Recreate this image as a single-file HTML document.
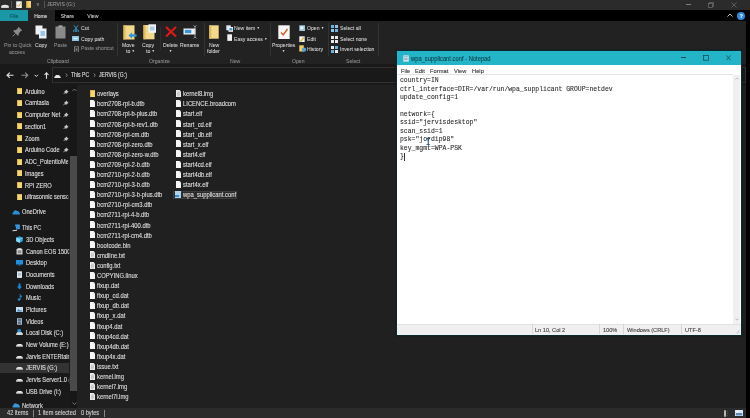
<!DOCTYPE html><html><head><meta charset="utf-8"><style>
html,body{margin:0;padding:0;width:750px;height:418px;overflow:hidden;background:#202020}
body{position:relative;font-family:"Liberation Sans",sans-serif}
#w{position:absolute;left:0;top:0;width:750px;height:418px;overflow:hidden;filter:blur(0.3px)}
#w>div,#w>svg{position:absolute}
.t{white-space:nowrap;-webkit-text-stroke:0.08px currentColor}
</style></head><body><div id="w">
<div style="left:0px;top:0px;width:750px;height:418px;background:#202020;"></div>
<div style="left:0px;top:0px;width:750px;height:10px;background:#2b2b2b;"></div>
<div style="left:0px;top:10px;width:750px;height:11px;background:#000000;"></div>
<div style="left:0px;top:10px;width:28px;height:11px;background:#1a98a6;"></div>
<div style="left:28px;top:10px;width:27px;height:11px;background:#222222;"></div>
<div class="t" style="left:10px;top:13.80px;font-size:5.2px;line-height:5.2px;color:#0f4f5a;">File</div>
<div class="t" style="left:34.2px;top:14.62px;font-size:4.95px;line-height:4.95px;color:#e0e0e0;">Home</div>
<div class="t" style="left:60.7px;top:13.50px;font-size:5px;line-height:5px;color:#d0d0d0;">Share</div>
<div class="t" style="left:87.3px;top:14.00px;font-size:5.2px;line-height:5.2px;color:#d0d0d0;">View</div>
<div style="left:0px;top:21px;width:745.6px;height:43px;background:#222222;"></div>
<div style="left:0px;top:64px;width:745.6px;height:21px;background:#191919;"></div>
<div style="left:52.4px;top:66.8px;width:694px;height:16px;background:#191919;border:0.8px solid #303030;box-sizing:border-box"></div>
<div class="t" style="left:71px;top:72.00px;font-size:6.6px;line-height:6.6px;color:#e6e6e6;transform:scaleX(0.77);transform-origin:0 50%;">This PC</div>
<div class="t" style="left:99.4px;top:72.00px;font-size:6.6px;line-height:6.6px;color:#e6e6e6;transform:scaleX(0.77);transform-origin:0 50%;">JERVIS (G:)</div>
<div style="left:0px;top:85px;width:70px;height:323px;background:#191919;"></div>
<div style="left:70px;top:85px;width:7px;height:323px;background:#171717;"></div>
<div style="left:70px;top:156px;width:7px;height:235px;background:#4a4a4a;"></div>
<div style="left:77px;top:85px;width:668.6px;height:323px;background:#202020;"></div>
<div style="left:745.6px;top:10px;width:4.4px;height:408px;background:#000000;"></div>
<svg style="left:12px;top:26px" width="11" height="11" viewBox="0 0 11 11"><path d="M6.5 0.8 L10.2 4.5 L8.6 5.3 L6.7 7.6 L6.9 9.3 L5.6 9.4 L1.6 5.4 L1.7 4.1 L3.4 4.3 L5.7 2.4 Z" fill="#8a8a8a"/><path d="M3.4 7.6 L0.6 10.4" stroke="#8a8a8a" stroke-width="1"/></svg>
<div class="t" style="left:3.5px;top:42.45px;font-size:5.9px;line-height:5.9px;color:#8c8c8c;transform:scaleX(0.87);transform-origin:0 50%;margin-top:0.2px">Pin to Quick</div>
<div class="t" style="left:8.8px;top:49.45px;font-size:5.9px;line-height:5.9px;color:#8c8c8c;transform:scaleX(0.87);transform-origin:0 50%;margin-top:0.2px">access</div>
<svg style="left:35px;top:25px" width="12" height="14" viewBox="0 0 12 14"><rect x="0.5" y="0.5" width="7" height="9" fill="#f2f2f2"/><rect x="4" y="3.5" width="7.5" height="10" fill="#e8f0f8"/><rect x="5.5" y="6" width="4.5" height="5" fill="#9cc8e8"/></svg>
<div class="t" style="left:35px;top:42.45px;font-size:5.9px;line-height:5.9px;color:#d2d2d2;transform:scaleX(0.87);transform-origin:0 50%;margin-top:0.2px">Copy</div>
<svg style="left:55px;top:25px" width="11" height="14" viewBox="0 0 11 14"><rect x="0.5" y="1.5" width="10" height="12" fill="#8a8a8a"/><rect x="3.5" y="0.3" width="4" height="2.5" fill="#a0a0a0"/></svg>
<div class="t" style="left:54.4px;top:42.45px;font-size:5.9px;line-height:5.9px;color:#8c8c8c;transform:scaleX(0.87);transform-origin:0 50%;margin-top:0.2px">Paste</div>
<svg style="left:73px;top:24.8px" width="6" height="7.5" viewBox="0 0 6 7.5"><path d="M1 0.3 L4 5 M5 0.3 L2 5" stroke="#3a9ad0" stroke-width="0.9"/><circle cx="1.6" cy="6" r="1.2" fill="none" stroke="#3a9ad0" stroke-width="0.8"/><circle cx="4.4" cy="6" r="1.2" fill="none" stroke="#3a9ad0" stroke-width="0.8"/></svg>
<div class="t" style="left:80.8px;top:25.95px;font-size:5.9px;line-height:5.9px;color:#d2d2d2;transform:scaleX(0.87);transform-origin:0 50%;margin-top:0.2px">Cut</div>
<svg style="left:72px;top:36px" width="7" height="5" viewBox="0 0 7 5"><rect x="0" y="0" width="7" height="5" fill="#8fc4ea"/><rect x="1.5" y="1.8" width="4" height="1.4" fill="#e8f4fc"/></svg>
<div class="t" style="left:80.8px;top:36.35px;font-size:5.9px;line-height:5.9px;color:#d2d2d2;transform:scaleX(0.87);transform-origin:0 50%;margin-top:0.2px">Copy path</div>
<svg style="left:73.5px;top:45.5px" width="5" height="6.5" viewBox="0 0 5 6.5"><rect x="0.4" y="0.8" width="4.2" height="5.4" fill="none" stroke="#8a8a8a" stroke-width="0.8"/><rect x="1.6" y="2.4" width="1.8" height="2.2" fill="#8a8a8a"/></svg>
<div class="t" style="left:80.8px;top:46.15px;font-size:5.9px;line-height:5.9px;color:#8c8c8c;transform:scaleX(0.87);transform-origin:0 50%;margin-top:0.2px">Paste shortcut</div>
<div class="t" style="left:47.2px;top:58.65px;font-size:5.9px;line-height:5.9px;color:#8c8c8c;transform:scaleX(0.87);transform-origin:0 50%;margin-top:0.2px">Clipboard</div>
<div style="left:117px;top:23px;width:0.8px;height:33px;background:#333333;"></div>
<svg style="left:122.5px;top:24.8px" width="14" height="15" viewBox="0 0 14 15"><rect x="0.5" y="0.3" width="11" height="14.2" fill="#f3d98a"/><rect x="0.5" y="0.3" width="2" height="14.2" fill="#e0bc5c"/><path d="M5.5 10.5 L9 7.3 L9 9.3 L13.5 9.3 L13.5 11.7 L9 11.7 L9 13.7 Z" fill="#3594d8"/></svg>
<div class="t" style="left:122px;top:42.45px;font-size:5.9px;line-height:5.9px;color:#d2d2d2;transform:scaleX(0.87);transform-origin:0 50%;margin-top:0.2px">Move</div>
<div class="t" style="left:126px;top:49.25px;font-size:5.9px;line-height:5.9px;color:#d2d2d2;transform:scaleX(0.87);transform-origin:0 50%;margin-top:0.2px">to <span style="font-size:3.6px;vertical-align:1px">&#x25BC;</span></div>
<svg style="left:142.5px;top:24px" width="14" height="16" viewBox="0 0 14 16"><rect x="0.5" y="1" width="11" height="14.3" fill="#f3d98a"/><rect x="0.5" y="1" width="2" height="14.3" fill="#e0bc5c"/><rect x="5.5" y="0.3" width="7.5" height="8.5" fill="#f0f4f8"/><rect x="7" y="2.5" width="4.5" height="4" fill="#a8cce8"/></svg>
<div class="t" style="left:142.3px;top:42.45px;font-size:5.9px;line-height:5.9px;color:#d2d2d2;transform:scaleX(0.87);transform-origin:0 50%;margin-top:0.2px">Copy</div>
<div class="t" style="left:145.5px;top:49.25px;font-size:5.9px;line-height:5.9px;color:#d2d2d2;transform:scaleX(0.87);transform-origin:0 50%;margin-top:0.2px">to <span style="font-size:3.6px;vertical-align:1px">&#x25BC;</span></div>
<div style="left:159.6px;top:27px;width:0.8px;height:23px;background:#2e2e2e;"></div>
<svg style="left:165px;top:26.3px" width="12" height="11.5" viewBox="0 0 12 11.5"><path d="M1 1 L11 10.5 M11 1 L1 10.5" stroke="#e01818" stroke-width="2.1"/></svg>
<div class="t" style="left:162.8px;top:42.45px;font-size:5.9px;line-height:5.9px;color:#d2d2d2;transform:scaleX(0.87);transform-origin:0 50%;margin-top:0.2px">Delete</div>
<div class="t" style="left:168.8px;top:48.85px;font-size:5.9px;line-height:5.9px;color:#d2d2d2;transform:scaleX(0.87);transform-origin:0 50%;margin-top:0.2px"><span style="font-size:3.6px;vertical-align:1px">&#x25BC;</span></div>
<svg style="left:182.5px;top:24.5px" width="15" height="14" viewBox="0 0 15 14"><rect x="0.5" y="3.5" width="12" height="6" fill="#f2f2f2"/><rect x="1.8" y="4.8" width="6.5" height="3.4" fill="#3596dc"/><path d="M10.5 0.5 L12 1.8 L13.5 0.5 M12 1.8 L12 12 M10.5 13.3 L12 12 L13.5 13.3" stroke="#bbbbbb" stroke-width="0.8" fill="none"/></svg>
<div class="t" style="left:180.4px;top:42.45px;font-size:5.9px;line-height:5.9px;color:#d2d2d2;transform:scaleX(0.87);transform-origin:0 50%;margin-top:0.2px">Rename</div>
<div class="t" style="left:149.2px;top:58.65px;font-size:5.9px;line-height:5.9px;color:#8c8c8c;transform:scaleX(0.87);transform-origin:0 50%;margin-top:0.2px">Organize</div>
<div style="left:203.6px;top:23px;width:0.8px;height:33px;background:#333333;"></div>
<svg style="left:209px;top:25px" width="10" height="14" viewBox="0 0 10 14"><rect x="0.3" y="0.3" width="9.4" height="13.4" fill="#f3d98a"/><rect x="0.3" y="0.3" width="2" height="13.4" fill="#e0bc5c"/></svg>
<div class="t" style="left:209px;top:42.45px;font-size:5.9px;line-height:5.9px;color:#d2d2d2;transform:scaleX(0.87);transform-origin:0 50%;margin-top:0.2px">New</div>
<div class="t" style="left:206.5px;top:49.25px;font-size:5.9px;line-height:5.9px;color:#d2d2d2;transform:scaleX(0.87);transform-origin:0 50%;margin-top:0.2px">folder</div>
<svg style="left:225.6px;top:24.8px" width="7.5" height="7" viewBox="0 0 7.5 7"><rect x="0.3" y="0.3" width="4.5" height="5" fill="#dfe8f0"/><rect x="2.5" y="2" width="4.7" height="4.8" fill="#f6f6f6"/><rect x="3.3" y="3" width="3" height="2.5" fill="#4a9ad8"/></svg>
<div class="t" style="left:234.4px;top:25.65px;font-size:5.9px;line-height:5.9px;color:#d2d2d2;transform:scaleX(0.87);transform-origin:0 50%;margin-top:0.2px">New item <span style="font-size:3.6px;vertical-align:1px">&#x25BC;</span></div>
<svg style="left:226.5px;top:34.4px" width="5.5" height="7.2" viewBox="0 0 5.5 7.2"><rect x="0.3" y="0.3" width="5" height="6.6" fill="#f2f2f2"/></svg>
<div class="t" style="left:234.4px;top:36.35px;font-size:5.9px;line-height:5.9px;color:#d2d2d2;transform:scaleX(0.87);transform-origin:0 50%;margin-top:0.2px">Easy access <span style="font-size:3.6px;vertical-align:1px">&#x25BC;</span></div>
<div class="t" style="left:230.4px;top:58.65px;font-size:5.9px;line-height:5.9px;color:#8c8c8c;transform:scaleX(0.87);transform-origin:0 50%;margin-top:0.2px">New</div>
<div style="left:269.6px;top:23px;width:0.8px;height:33px;background:#333333;"></div>
<svg style="left:277.5px;top:24.8px" width="12" height="14.5" viewBox="0 0 12 14.5"><rect x="0.3" y="0.3" width="11.4" height="13.9" fill="#f7f7f7"/><path d="M3 7.5 L5.2 10 L9.5 4" stroke="#d2581e" stroke-width="1.3" fill="none"/></svg>
<div class="t" style="left:272px;top:42.45px;font-size:5.9px;line-height:5.9px;color:#d2d2d2;transform:scaleX(0.87);transform-origin:0 50%;margin-top:0.2px">Properties</div>
<div class="t" style="left:281.8px;top:48.85px;font-size:5.9px;line-height:5.9px;color:#d2d2d2;transform:scaleX(0.87);transform-origin:0 50%;margin-top:0.2px"><span style="font-size:3.6px;vertical-align:1px">&#x25BC;</span></div>
<svg style="left:298.8px;top:24.8px" width="6.5" height="6.5" viewBox="0 0 6.5 6.5"><rect x="0.3" y="0.3" width="6" height="6" fill="#9cc6e6"/><rect x="1.3" y="1.3" width="3" height="3" fill="#e8f2f8"/></svg>
<div class="t" style="left:306.8px;top:25.85px;font-size:5.9px;line-height:5.9px;color:#d2d2d2;transform:scaleX(0.87);transform-origin:0 50%;margin-top:0.2px">Open <span style="font-size:3.6px;vertical-align:1px">&#x25BC;</span></div>
<svg style="left:299px;top:35.7px" width="6" height="6.7" viewBox="0 0 6 6.7"><rect x="0.3" y="0.3" width="5.4" height="6.2" fill="#f4f4f4"/><path d="M1.5 5.5 L5 1.5" stroke="#e0b030" stroke-width="1.2"/></svg>
<div class="t" style="left:306.8px;top:36.55px;font-size:5.9px;line-height:5.9px;color:#d2d2d2;transform:scaleX(0.87);transform-origin:0 50%;margin-top:0.2px">Edit</div>
<svg style="left:299px;top:45.3px" width="7.5" height="7" viewBox="0 0 7.5 7"><rect x="0.3" y="0.3" width="4.5" height="6.2" fill="#f0cf6a"/><circle cx="5" cy="4.6" r="2.2" fill="#5aa0d0"/></svg>
<div class="t" style="left:306.8px;top:46.65px;font-size:5.9px;line-height:5.9px;color:#d2d2d2;transform:scaleX(0.87);transform-origin:0 50%;margin-top:0.2px">History</div>
<div class="t" style="left:291.6px;top:58.65px;font-size:5.9px;line-height:5.9px;color:#8c8c8c;transform:scaleX(0.87);transform-origin:0 50%;margin-top:0.2px">Open</div>
<div style="left:328.4px;top:23px;width:0.8px;height:33px;background:#333333;"></div>
<svg style="left:331.3px;top:24.8px" width="7" height="7" viewBox="0 0 7 7"><rect x="0" y="0" width="3" height="3" fill="#6cb4e4"/><rect x="4" y="0" width="3" height="3" fill="#8cc4ec"/><rect x="0" y="4" width="3" height="3" fill="#8cc4ec"/><rect x="4" y="4" width="3" height="3" fill="#6cb4e4"/></svg>
<div class="t" style="left:339.9px;top:25.85px;font-size:5.9px;line-height:5.9px;color:#d2d2d2;transform:scaleX(0.87);transform-origin:0 50%;margin-top:0.2px">Select all</div>
<svg style="left:331.3px;top:35.5px" width="7" height="7" viewBox="0 0 7 7"><rect x="0" y="0" width="3" height="3" fill="#e8e8e8"/><rect x="4" y="0" width="3" height="3" fill="#e8e8e8"/><rect x="0" y="4" width="3" height="3" fill="#e8e8e8"/><rect x="4" y="4" width="3" height="3" fill="#e8e8e8"/></svg>
<div class="t" style="left:339.9px;top:36.35px;font-size:5.9px;line-height:5.9px;color:#d2d2d2;transform:scaleX(0.87);transform-origin:0 50%;margin-top:0.2px">Select none</div>
<svg style="left:331.3px;top:45.5px" width="7" height="7" viewBox="0 0 7 7"><rect x="0" y="0" width="3" height="3" fill="#e8e8e8"/><rect x="4" y="0" width="3" height="3" fill="#6cb4e4"/><rect x="0" y="4" width="3" height="3" fill="#6cb4e4"/><rect x="4" y="4" width="3" height="3" fill="#e8e8e8"/></svg>
<div class="t" style="left:339.9px;top:46.65px;font-size:5.9px;line-height:5.9px;color:#d2d2d2;transform:scaleX(0.87);transform-origin:0 50%;margin-top:0.2px">Invert selection</div>
<div class="t" style="left:346px;top:58.65px;font-size:5.9px;line-height:5.9px;color:#8c8c8c;transform:scaleX(0.87);transform-origin:0 50%;margin-top:0.2px">Select</div>
<div style="left:378px;top:23px;width:0.8px;height:33px;background:#333333;"></div>
<svg style="left:0.5px;top:3.5px" width="8" height="4.5" viewBox="0 0 8 4.5"><ellipse cx="4" cy="2.5" rx="3.8" ry="1.8" fill="#e8e8e8"/><rect x="0.3" y="2.5" width="7.4" height="1.8" fill="#d0d0d0"/></svg>
<div style="left:10.5px;top:1px;width:0.7px;height:7px;background:#555555;"></div>
<svg style="left:16px;top:1px" width="6" height="7.2" viewBox="0 0 6 7.2"><rect x="0.2" y="0.3" width="5.6" height="6.8" fill="#f4f4f4"/><path d="M1.3 4 L2.6 5.4 L4.8 2.2" stroke="#d49a2a" stroke-width="0.9" fill="none"/></svg>
<svg style="left:26.4px;top:1.2px" width="5" height="6.8" viewBox="0 0 5 6.8"><rect x="0" y="0" width="5" height="6.8" fill="#f0d070"/><rect x="0" y="0" width="1.3" height="6.8" fill="#c8a040"/></svg>
<div class="t" style="left:36.3px;top:3.35px;font-size:4.5px;line-height:4.5px;color:#9a9a9a;">&#x2228;</div>
<div style="left:44.2px;top:1px;width:0.7px;height:7px;background:#555555;"></div>
<div style="left:686px;top:4.1px;width:5px;height:0.6px;background:#7c7c7c;"></div>
<svg style="left:708px;top:2px" width="6" height="6" viewBox="0 0 6 6"><rect x="0.5" y="1.5" width="4" height="4" fill="none" stroke="#7c7c7c" stroke-width="0.6"/><path d="M1.5 1.5 V0.5 H5.5 V4.5 H4.5" fill="none" stroke="#7c7c7c" stroke-width="0.6"/></svg>
<svg style="left:731px;top:2px" width="6" height="6" viewBox="0 0 6 6"><path d="M0.5 0.5 L5.5 5.5 M5.5 0.5 L0.5 5.5" stroke="#7c7c7c" stroke-width="0.6"/></svg>
<svg style="left:727px;top:12.5px" width="6" height="4" viewBox="0 0 6 4"><path d="M0.5 3.5 L3 1 L5.5 3.5" fill="none" stroke="#d8d8d8" stroke-width="0.9"/></svg>
<div style="left:737px;top:11.5px;width:8px;height:8px;border-radius:50%;background:#2f8be0"></div>
<div class="t" style="left:739.8px;top:13.60px;font-size:5px;line-height:5px;color:#ffffff;font-weight:bold">?</div>
<svg style="left:5.5px;top:72px" width="8" height="6.5" viewBox="0 0 8 6.5"><path d="M1 3.25 H7.5 M3.8 0.6 L1 3.25 L3.8 5.9" stroke="#e2e2e2" stroke-width="1.1" fill="none"/></svg>
<svg style="left:21px;top:72px" width="8" height="6.5" viewBox="0 0 8 6.5"><path d="M0.5 3.25 H6.8 M4.2 0.6 L6.8 3.25 L4.2 5.9" stroke="#8e8e8e" stroke-width="1.1" fill="none"/></svg>
<svg style="left:34px;top:73.5px" width="5" height="3.5" viewBox="0 0 5 3.5"><path d="M0.6 0.8 L2.3 2.5 L4 0.8" stroke="#e2e2e2" stroke-width="1" fill="none"/></svg>
<svg style="left:43.8px;top:72.2px" width="5" height="7" viewBox="0 0 5 7"><path d="M2.5 6.8 V1 M0.5 3 L2.5 0.8 L4.5 3" stroke="#e2e2e2" stroke-width="1.1" fill="none"/></svg>
<svg style="left:54px;top:73.6px" width="7" height="4.5" viewBox="0 0 7 4.5"><path d="M0.3 3.2 C1 1.5 2 1 3.5 1 C5 1 6 1.5 6.7 3.2 L6.7 4 L0.3 4 Z" fill="#e6e6e6"/></svg>
<svg style="left:64.8px;top:72.8px" width="3" height="4.5" viewBox="0 0 3 4.5"><path d="M0.6 0.5 L2.4 2.25 L0.6 4" stroke="#9a9a9a" stroke-width="0.8" fill="none"/></svg>
<svg style="left:93.3px;top:72.8px" width="3" height="4.5" viewBox="0 0 3 4.5"><path d="M0.6 0.5 L2.4 2.25 L0.6 4" stroke="#9a9a9a" stroke-width="0.8" fill="none"/></svg>
<div style="left:0px;top:363px;width:69px;height:10px;background:#333333;"></div>
<svg style="left:17px;top:88.0px" width="5" height="6" viewBox="0 0 5 6"><rect x="0" y="0" width="5" height="6" fill="#e2b84a"/><rect x="1" y="1" width="4" height="5" fill="#f4d670"/></svg>
<div class="t" style="left:25.3px;top:88.65px;font-size:6.3px;line-height:6.3px;color:#e2e2e2;transform:scaleX(0.9);transform-origin:0 50%;width:41px;height:9px;overflow:hidden">Arduino</div>
<svg style="left:63px;top:88.5px" width="6" height="5.5" viewBox="0 0 6 5.5"><path d="M3.2 0.6 L5.6 3 L4.5 3.4 L3.4 4.6 L3.3 5.2 L0.9 2.7 L1.5 2.5 L2.7 1.6 Z" fill="#c4c4c4"/><path d="M2 3.6 L0.3 5.3" stroke="#c4c4c4" stroke-width="0.8"/></svg>
<svg style="left:17px;top:99.75px" width="5" height="6" viewBox="0 0 5 6"><rect x="0" y="0" width="5" height="6" fill="#e2b84a"/><rect x="1" y="1" width="4" height="5" fill="#f4d670"/></svg>
<div class="t" style="left:25.3px;top:100.40px;font-size:6.3px;line-height:6.3px;color:#e2e2e2;transform:scaleX(0.9);transform-origin:0 50%;width:41px;height:9px;overflow:hidden">Camtasia</div>
<svg style="left:63px;top:100.25px" width="6" height="5.5" viewBox="0 0 6 5.5"><path d="M3.2 0.6 L5.6 3 L4.5 3.4 L3.4 4.6 L3.3 5.2 L0.9 2.7 L1.5 2.5 L2.7 1.6 Z" fill="#c4c4c4"/><path d="M2 3.6 L0.3 5.3" stroke="#c4c4c4" stroke-width="0.8"/></svg>
<svg style="left:17px;top:111.5px" width="5" height="6" viewBox="0 0 5 6"><rect x="0" y="0" width="5" height="6" fill="#e2b84a"/><rect x="1" y="1" width="4" height="5" fill="#f4d670"/></svg>
<div class="t" style="left:25.3px;top:112.15px;font-size:6.3px;line-height:6.3px;color:#e2e2e2;transform:scaleX(0.9);transform-origin:0 50%;width:41px;height:9px;overflow:hidden">Computer Net</div>
<svg style="left:63px;top:112.0px" width="6" height="5.5" viewBox="0 0 6 5.5"><path d="M3.2 0.6 L5.6 3 L4.5 3.4 L3.4 4.6 L3.3 5.2 L0.9 2.7 L1.5 2.5 L2.7 1.6 Z" fill="#c4c4c4"/><path d="M2 3.6 L0.3 5.3" stroke="#c4c4c4" stroke-width="0.8"/></svg>
<svg style="left:17px;top:123.25px" width="5" height="6" viewBox="0 0 5 6"><rect x="0" y="0" width="5" height="6" fill="#e2b84a"/><rect x="1" y="1" width="4" height="5" fill="#f4d670"/></svg>
<div class="t" style="left:25.3px;top:123.90px;font-size:6.3px;line-height:6.3px;color:#e2e2e2;transform:scaleX(0.9);transform-origin:0 50%;width:41px;height:9px;overflow:hidden">section1</div>
<svg style="left:63px;top:123.75px" width="6" height="5.5" viewBox="0 0 6 5.5"><path d="M3.2 0.6 L5.6 3 L4.5 3.4 L3.4 4.6 L3.3 5.2 L0.9 2.7 L1.5 2.5 L2.7 1.6 Z" fill="#c4c4c4"/><path d="M2 3.6 L0.3 5.3" stroke="#c4c4c4" stroke-width="0.8"/></svg>
<svg style="left:17px;top:135.0px" width="5" height="6" viewBox="0 0 5 6"><rect x="0" y="0" width="5" height="6" fill="#e2b84a"/><rect x="1" y="1" width="4" height="5" fill="#f4d670"/></svg>
<div class="t" style="left:25.3px;top:135.65px;font-size:6.3px;line-height:6.3px;color:#e2e2e2;transform:scaleX(0.9);transform-origin:0 50%;width:41px;height:9px;overflow:hidden">Zoom</div>
<svg style="left:63px;top:135.5px" width="6" height="5.5" viewBox="0 0 6 5.5"><path d="M3.2 0.6 L5.6 3 L4.5 3.4 L3.4 4.6 L3.3 5.2 L0.9 2.7 L1.5 2.5 L2.7 1.6 Z" fill="#c4c4c4"/><path d="M2 3.6 L0.3 5.3" stroke="#c4c4c4" stroke-width="0.8"/></svg>
<svg style="left:17px;top:146.75px" width="5" height="6" viewBox="0 0 5 6"><rect x="0" y="0" width="5" height="6" fill="#e2b84a"/><rect x="1" y="1" width="4" height="5" fill="#f4d670"/></svg>
<div class="t" style="left:25.3px;top:147.40px;font-size:6.3px;line-height:6.3px;color:#e2e2e2;transform:scaleX(0.9);transform-origin:0 50%;width:41px;height:9px;overflow:hidden">Arduino Code</div>
<svg style="left:63px;top:147.25px" width="6" height="5.5" viewBox="0 0 6 5.5"><path d="M3.2 0.6 L5.6 3 L4.5 3.4 L3.4 4.6 L3.3 5.2 L0.9 2.7 L1.5 2.5 L2.7 1.6 Z" fill="#c4c4c4"/><path d="M2 3.6 L0.3 5.3" stroke="#c4c4c4" stroke-width="0.8"/></svg>
<svg style="left:17px;top:158.5px" width="5" height="6" viewBox="0 0 5 6"><rect x="0" y="0" width="5" height="6" fill="#e2b84a"/><rect x="1" y="1" width="4" height="5" fill="#f4d670"/></svg>
<div class="t" style="left:25.3px;top:159.15px;font-size:6.3px;line-height:6.3px;color:#e2e2e2;transform:scaleX(0.9);transform-origin:0 50%;width:48px;height:9px;overflow:hidden">ADC_PotentioMeter</div>
<svg style="left:17px;top:170.25px" width="5" height="6" viewBox="0 0 5 6"><rect x="0" y="0" width="5" height="6" fill="#e2b84a"/><rect x="1" y="1" width="4" height="5" fill="#f4d670"/></svg>
<div class="t" style="left:25.3px;top:170.90px;font-size:6.3px;line-height:6.3px;color:#e2e2e2;transform:scaleX(0.9);transform-origin:0 50%;width:48px;height:9px;overflow:hidden">Images</div>
<svg style="left:17px;top:182.0px" width="5" height="6" viewBox="0 0 5 6"><rect x="0" y="0" width="5" height="6" fill="#e2b84a"/><rect x="1" y="1" width="4" height="5" fill="#f4d670"/></svg>
<div class="t" style="left:25.3px;top:182.65px;font-size:6.3px;line-height:6.3px;color:#e2e2e2;transform:scaleX(0.9);transform-origin:0 50%;width:48px;height:9px;overflow:hidden">RPI ZERO</div>
<svg style="left:17px;top:193.75px" width="5" height="6" viewBox="0 0 5 6"><rect x="0" y="0" width="5" height="6" fill="#e2b84a"/><rect x="1" y="1" width="4" height="5" fill="#f4d670"/></svg>
<div class="t" style="left:25.3px;top:194.40px;font-size:6.3px;line-height:6.3px;color:#e2e2e2;transform:scaleX(0.9);transform-origin:0 50%;width:48px;height:9px;overflow:hidden">ultrasonnic sensor</div>
<div class="t" style="left:21.5px;top:209.45px;font-size:6.3px;line-height:6.3px;color:#e2e2e2;transform:scaleX(0.9);transform-origin:0 50%;">OneDrive</div>
<svg style="left:11.8px;top:209px" width="8.5" height="6" viewBox="0 0 8.5 6"><path d="M1.3 5.6 C0.2 5.6 0.1 3.6 1.4 3.5 C1.6 1.6 3.8 0.6 5 2 C6.8 1.6 7.2 3 7 3.6 C8.4 3.8 8.3 5.6 7.2 5.6 Z" fill="#2b8ed8"/></svg>
<div class="t" style="left:22px;top:225.35px;font-size:6.3px;line-height:6.3px;color:#e2e2e2;transform:scaleX(0.85);transform-origin:0 50%;">This PC</div>
<svg style="left:12px;top:224.2px" width="8.5" height="7.5" viewBox="0 0 8.5 7.5"><path d="M3 0.5 L7.8 0.5 L7.8 5 L4.5 5.6 Z" fill="#3aa0e8"/><path d="M4.5 2 C6 2 6.5 3 5 4.8" stroke="#1a70b8" stroke-width="0.7" fill="none"/><path d="M0.5 6.8 L5 6.2" stroke="#e0e0e0" stroke-width="1"/></svg>
<div class="t" style="left:25.6px;top:236.95px;font-size:6.3px;line-height:6.3px;color:#e2e2e2;transform:scaleX(0.9);transform-origin:0 50%;width:48px;height:9px;overflow:hidden">3D Objects</div>
<svg style="left:16px;top:236.0px" width="7" height="7" viewBox="0 0 7 7"><path d="M3.5 0.3 L6.8 1.8 L6.8 5.2 L3.5 6.7 L0.2 5.2 L0.2 1.8 Z" fill="#2aa8e0"/><path d="M0.2 1.8 L3.5 3.3 L6.8 1.8 M3.5 3.3 V6.7" stroke="#bfeaff" stroke-width="0.6" fill="none"/><path d="M0.2 1.8 L3.5 3.3 L3.5 6.7 L0.2 5.2 Z" fill="#8fd8f8"/></svg>
<div class="t" style="left:25.6px;top:248.62px;font-size:6.3px;line-height:6.3px;color:#e2e2e2;transform:scaleX(0.9);transform-origin:0 50%;width:48px;height:9px;overflow:hidden">Canon EOS 1500D</div>
<svg style="left:16px;top:247.67px" width="7" height="7" viewBox="0 0 7 7"><rect x="0.5" y="1" width="6" height="5.5" fill="#c8c8c8"/><rect x="1.5" y="0.2" width="4" height="1.5" fill="#e8e8e8"/><rect x="2" y="2.5" width="3" height="2.5" fill="#8a8a8a"/></svg>
<div class="t" style="left:25.6px;top:260.29px;font-size:6.3px;line-height:6.3px;color:#e2e2e2;transform:scaleX(0.9);transform-origin:0 50%;width:48px;height:9px;overflow:hidden">Desktop</div>
<svg style="left:16px;top:259.34px" width="7" height="7" viewBox="0 0 7 7"><rect x="0" y="1" width="7" height="4.5" fill="#1e90e0"/><rect x="2.5" y="5.5" width="2" height="1" fill="#1e90e0"/></svg>
<div class="t" style="left:25.6px;top:271.96px;font-size:6.3px;line-height:6.3px;color:#e2e2e2;transform:scaleX(0.9);transform-origin:0 50%;width:48px;height:9px;overflow:hidden">Documents</div>
<svg style="left:16px;top:271.01px" width="7" height="7" viewBox="0 0 7 7"><rect x="1" y="0.3" width="5" height="6.6" fill="#dfe6ee"/><rect x="2" y="2" width="3" height="0.5" fill="#7f9fbf"/><rect x="2" y="3.2" width="3" height="0.5" fill="#7f9fbf"/><rect x="2" y="4.4" width="2.5" height="0.5" fill="#7f9fbf"/></svg>
<div class="t" style="left:25.6px;top:283.63px;font-size:6.3px;line-height:6.3px;color:#e2e2e2;transform:scaleX(0.9);transform-origin:0 50%;width:48px;height:9px;overflow:hidden">Downloads</div>
<svg style="left:16px;top:282.68px" width="7" height="7" viewBox="0 0 7 7"><path d="M2.5 0.5 H4.5 V3.5 H6 L3.5 6.5 L1 3.5 H2.5 Z" fill="#1e88d8"/></svg>
<div class="t" style="left:25.6px;top:295.30px;font-size:6.3px;line-height:6.3px;color:#e2e2e2;transform:scaleX(0.9);transform-origin:0 50%;width:48px;height:9px;overflow:hidden">Music</div>
<svg style="left:16px;top:294.35px" width="7" height="7" viewBox="0 0 7 7"><path d="M3.3 0.5 L5.5 1.8 L5.5 2.8 L4.2 2.2 L4.2 5.5" stroke="#2a96e0" stroke-width="0.9" fill="none"/><ellipse cx="3" cy="5.6" rx="1.4" ry="1.1" fill="#2a96e0"/></svg>
<div class="t" style="left:25.6px;top:306.97px;font-size:6.3px;line-height:6.3px;color:#e2e2e2;transform:scaleX(0.9);transform-origin:0 50%;width:48px;height:9px;overflow:hidden">Pictures</div>
<svg style="left:16px;top:306.02px" width="7" height="7" viewBox="0 0 7 7"><rect x="0" y="1" width="7" height="5" fill="#c8dcec"/><path d="M0.5 5.5 L2.5 3 L4 4.5 L5 3.7 L6.5 5.5 Z" fill="#4a8ac0"/></svg>
<div class="t" style="left:25.6px;top:318.64px;font-size:6.3px;line-height:6.3px;color:#e2e2e2;transform:scaleX(0.9);transform-origin:0 50%;width:48px;height:9px;overflow:hidden">Videos</div>
<svg style="left:16px;top:317.69px" width="7" height="7" viewBox="0 0 7 7"><rect x="1" y="0.2" width="5" height="6.6" fill="#b0b0b0"/><rect x="2" y="1" width="3" height="2.2" fill="#4a78a8"/><rect x="2" y="3.8" width="3" height="2.2" fill="#4a78a8"/></svg>
<div class="t" style="left:25.6px;top:330.31px;font-size:6.3px;line-height:6.3px;color:#e2e2e2;transform:scaleX(0.9);transform-origin:0 50%;width:48px;height:9px;overflow:hidden">Local Disk (C:)</div>
<svg style="left:16px;top:329.36px" width="7" height="7" viewBox="0 0 7 7"><path d="M0.2 4.5 L1.5 3 L5.5 3 L6.8 4.5 L6.8 6 L0.2 6 Z" fill="#d8d8d8"/><rect x="1.5" y="0.3" width="3.4" height="3" fill="#2a9ae0"/></svg>
<div class="t" style="left:25.6px;top:341.98px;font-size:6.3px;line-height:6.3px;color:#e2e2e2;transform:scaleX(0.9);transform-origin:0 50%;width:48px;height:9px;overflow:hidden">New Volume (E:)</div>
<svg style="left:16px;top:341.03px" width="7" height="7" viewBox="0 0 7 7"><path d="M0.2 4.6 C0.8 3.2 1.6 3 3.5 3 C5.4 3 6.2 3.2 6.8 4.6 L6.8 5.6 L0.2 5.6 Z" fill="#e6e6e6"/><rect x="0.2" y="4.8" width="6.6" height="0.9" fill="#a8a8a8"/></svg>
<div class="t" style="left:25.6px;top:353.65px;font-size:6.3px;line-height:6.3px;color:#e2e2e2;transform:scaleX(0.9);transform-origin:0 50%;width:48px;height:9px;overflow:hidden">Jarvis ENTERtainment</div>
<svg style="left:16px;top:352.7px" width="7" height="7" viewBox="0 0 7 7"><path d="M0.2 4.6 C0.8 3.2 1.6 3 3.5 3 C5.4 3 6.2 3.2 6.8 4.6 L6.8 5.6 L0.2 5.6 Z" fill="#e6e6e6"/><rect x="0.2" y="4.8" width="6.6" height="0.9" fill="#a8a8a8"/></svg>
<div class="t" style="left:25.6px;top:365.32px;font-size:6.3px;line-height:6.3px;color:#e2e2e2;transform:scaleX(0.9);transform-origin:0 50%;width:48px;height:9px;overflow:hidden">JERVIS (G:)</div>
<svg style="left:16px;top:364.37px" width="7" height="7" viewBox="0 0 7 7"><path d="M0.2 4.6 C0.8 3.2 1.6 3 3.5 3 C5.4 3 6.2 3.2 6.8 4.6 L6.8 5.6 L0.2 5.6 Z" fill="#e6e6e6"/><rect x="0.2" y="4.8" width="6.6" height="0.9" fill="#a8a8a8"/></svg>
<div class="t" style="left:25.6px;top:376.99px;font-size:6.3px;line-height:6.3px;color:#e2e2e2;transform:scaleX(0.9);transform-origin:0 50%;width:48px;height:9px;overflow:hidden">Jervis Server1.0 (H:)</div>
<svg style="left:16px;top:376.03999999999996px" width="7" height="7" viewBox="0 0 7 7"><path d="M0.2 4.6 C0.8 3.2 1.6 3 3.5 3 C5.4 3 6.2 3.2 6.8 4.6 L6.8 5.6 L0.2 5.6 Z" fill="#e6e6e6"/><rect x="0.2" y="4.8" width="6.6" height="0.9" fill="#a8a8a8"/></svg>
<div class="t" style="left:25.6px;top:388.66px;font-size:6.3px;line-height:6.3px;color:#e2e2e2;transform:scaleX(0.9);transform-origin:0 50%;width:48px;height:9px;overflow:hidden">USB Drive (I:)</div>
<svg style="left:16px;top:387.71000000000004px" width="7" height="7" viewBox="0 0 7 7"><path d="M0.2 4.6 C0.8 3.2 1.6 3 3.5 3 C5.4 3 6.2 3.2 6.8 4.6 L6.8 5.6 L0.2 5.6 Z" fill="#e6e6e6"/><rect x="0.2" y="4.8" width="6.6" height="0.9" fill="#a8a8a8"/></svg>
<div class="t" style="left:21.5px;top:402.75px;font-size:6.3px;line-height:6.3px;color:#e2e2e2;transform:scaleX(0.9);transform-origin:0 50%;">Network</div>
<svg style="left:11.5px;top:402px" width="8" height="6" viewBox="0 0 8 6"><path d="M1.3 5.6 C0.2 5.6 0.1 3.6 1.4 3.5 C1.6 1.6 3.8 0.6 5 2 C6.8 1.6 7.2 3 7 3.6 C8.4 3.8 8.3 5.6 7.2 5.6 Z" fill="#3a9ad8"/></svg>
<svg style="left:71.5px;top:87.5px" width="5" height="3.5" viewBox="0 0 5 3.5"><path d="M0.5 3 L2.5 1 L4.5 3" fill="none" stroke="#8a8a8a" stroke-width="0.8"/></svg>
<svg style="left:71.5px;top:402px" width="5" height="3.5" viewBox="0 0 5 3.5"><path d="M0.5 0.5 L2.5 2.5 L4.5 0.5" fill="none" stroke="#8a8a8a" stroke-width="0.8"/></svg>
<div style="left:173px;top:190.5px;width:64px;height:8.5px;background:#2b2b2b;border:0.6px solid #3c3c3c;box-sizing:border-box"></div>
<svg style="left:90px;top:90.0px" width="5" height="7" viewBox="0 0 5 7"><rect x="0" y="0" width="5" height="7" fill="#e2b84a"/><rect x="1" y="1" width="4" height="6" fill="#f4d670"/></svg>
<div class="t" style="left:97.4px;top:91.25px;font-size:6.5px;line-height:6.5px;color:#e0e0e0;transform:scaleX(0.9);transform-origin:0 50%;">overlays</div>
<svg style="left:90px;top:99.9px" width="5" height="7" viewBox="0 0 5 7"><path d="M0 0 H3.6 L5 1.4 V7 H0 Z" fill="#f6f6f6"/><path d="M3.6 0 V1.4 H5" fill="#c8c8c8"/></svg>
<div class="t" style="left:97.4px;top:101.35px;font-size:6.5px;line-height:6.5px;color:#e0e0e0;transform:scaleX(0.9);transform-origin:0 50%;">bcm2708-rpi-b.dtb</div>
<svg style="left:90px;top:110.0px" width="5" height="7" viewBox="0 0 5 7"><path d="M0 0 H3.6 L5 1.4 V7 H0 Z" fill="#f6f6f6"/><path d="M3.6 0 V1.4 H5" fill="#c8c8c8"/></svg>
<div class="t" style="left:97.4px;top:111.45px;font-size:6.5px;line-height:6.5px;color:#e0e0e0;transform:scaleX(0.9);transform-origin:0 50%;">bcm2708-rpi-b-plus.dtb</div>
<svg style="left:90px;top:120.1px" width="5" height="7" viewBox="0 0 5 7"><path d="M0 0 H3.6 L5 1.4 V7 H0 Z" fill="#f6f6f6"/><path d="M3.6 0 V1.4 H5" fill="#c8c8c8"/></svg>
<div class="t" style="left:97.4px;top:121.55px;font-size:6.5px;line-height:6.5px;color:#e0e0e0;transform:scaleX(0.9);transform-origin:0 50%;">bcm2708-rpi-b-rev1.dtb</div>
<svg style="left:90px;top:130.2px" width="5" height="7" viewBox="0 0 5 7"><path d="M0 0 H3.6 L5 1.4 V7 H0 Z" fill="#f6f6f6"/><path d="M3.6 0 V1.4 H5" fill="#c8c8c8"/></svg>
<div class="t" style="left:97.4px;top:131.65px;font-size:6.5px;line-height:6.5px;color:#e0e0e0;transform:scaleX(0.9);transform-origin:0 50%;">bcm2708-rpi-cm.dtb</div>
<svg style="left:90px;top:140.3px" width="5" height="7" viewBox="0 0 5 7"><path d="M0 0 H3.6 L5 1.4 V7 H0 Z" fill="#f6f6f6"/><path d="M3.6 0 V1.4 H5" fill="#c8c8c8"/></svg>
<div class="t" style="left:97.4px;top:141.75px;font-size:6.5px;line-height:6.5px;color:#e0e0e0;transform:scaleX(0.9);transform-origin:0 50%;">bcm2708-rpi-zero.dtb</div>
<svg style="left:90px;top:150.4px" width="5" height="7" viewBox="0 0 5 7"><path d="M0 0 H3.6 L5 1.4 V7 H0 Z" fill="#f6f6f6"/><path d="M3.6 0 V1.4 H5" fill="#c8c8c8"/></svg>
<div class="t" style="left:97.4px;top:151.85px;font-size:6.5px;line-height:6.5px;color:#e0e0e0;transform:scaleX(0.9);transform-origin:0 50%;">bcm2708-rpi-zero-w.dtb</div>
<svg style="left:90px;top:160.5px" width="5" height="7" viewBox="0 0 5 7"><path d="M0 0 H3.6 L5 1.4 V7 H0 Z" fill="#f6f6f6"/><path d="M3.6 0 V1.4 H5" fill="#c8c8c8"/></svg>
<div class="t" style="left:97.4px;top:161.95px;font-size:6.5px;line-height:6.5px;color:#e0e0e0;transform:scaleX(0.9);transform-origin:0 50%;">bcm2709-rpi-2-b.dtb</div>
<svg style="left:90px;top:170.6px" width="5" height="7" viewBox="0 0 5 7"><path d="M0 0 H3.6 L5 1.4 V7 H0 Z" fill="#f6f6f6"/><path d="M3.6 0 V1.4 H5" fill="#c8c8c8"/></svg>
<div class="t" style="left:97.4px;top:172.05px;font-size:6.5px;line-height:6.5px;color:#e0e0e0;transform:scaleX(0.9);transform-origin:0 50%;">bcm2710-rpi-2-b.dtb</div>
<svg style="left:90px;top:180.7px" width="5" height="7" viewBox="0 0 5 7"><path d="M0 0 H3.6 L5 1.4 V7 H0 Z" fill="#f6f6f6"/><path d="M3.6 0 V1.4 H5" fill="#c8c8c8"/></svg>
<div class="t" style="left:97.4px;top:182.15px;font-size:6.5px;line-height:6.5px;color:#e0e0e0;transform:scaleX(0.9);transform-origin:0 50%;">bcm2710-rpi-3-b.dtb</div>
<svg style="left:90px;top:190.8px" width="5" height="7" viewBox="0 0 5 7"><path d="M0 0 H3.6 L5 1.4 V7 H0 Z" fill="#f6f6f6"/><path d="M3.6 0 V1.4 H5" fill="#c8c8c8"/></svg>
<div class="t" style="left:97.4px;top:192.25px;font-size:6.5px;line-height:6.5px;color:#e0e0e0;transform:scaleX(0.9);transform-origin:0 50%;">bcm2710-rpi-3-b-plus.dtb</div>
<svg style="left:90px;top:200.9px" width="5" height="7" viewBox="0 0 5 7"><path d="M0 0 H3.6 L5 1.4 V7 H0 Z" fill="#f6f6f6"/><path d="M3.6 0 V1.4 H5" fill="#c8c8c8"/></svg>
<div class="t" style="left:97.4px;top:202.35px;font-size:6.5px;line-height:6.5px;color:#e0e0e0;transform:scaleX(0.9);transform-origin:0 50%;">bcm2710-rpi-cm3.dtb</div>
<svg style="left:90px;top:211.0px" width="5" height="7" viewBox="0 0 5 7"><path d="M0 0 H3.6 L5 1.4 V7 H0 Z" fill="#f6f6f6"/><path d="M3.6 0 V1.4 H5" fill="#c8c8c8"/></svg>
<div class="t" style="left:97.4px;top:212.45px;font-size:6.5px;line-height:6.5px;color:#e0e0e0;transform:scaleX(0.9);transform-origin:0 50%;">bcm2711-rpi-4-b.dtb</div>
<svg style="left:90px;top:221.1px" width="5" height="7" viewBox="0 0 5 7"><path d="M0 0 H3.6 L5 1.4 V7 H0 Z" fill="#f6f6f6"/><path d="M3.6 0 V1.4 H5" fill="#c8c8c8"/></svg>
<div class="t" style="left:97.4px;top:222.55px;font-size:6.5px;line-height:6.5px;color:#e0e0e0;transform:scaleX(0.9);transform-origin:0 50%;">bcm2711-rpi-400.dtb</div>
<svg style="left:90px;top:231.2px" width="5" height="7" viewBox="0 0 5 7"><path d="M0 0 H3.6 L5 1.4 V7 H0 Z" fill="#f6f6f6"/><path d="M3.6 0 V1.4 H5" fill="#c8c8c8"/></svg>
<div class="t" style="left:97.4px;top:232.65px;font-size:6.5px;line-height:6.5px;color:#e0e0e0;transform:scaleX(0.9);transform-origin:0 50%;">bcm2711-rpi-cm4.dtb</div>
<svg style="left:90px;top:241.3px" width="5" height="7" viewBox="0 0 5 7"><path d="M0 0 H3.6 L5 1.4 V7 H0 Z" fill="#f6f6f6"/><path d="M3.6 0 V1.4 H5" fill="#c8c8c8"/></svg>
<div class="t" style="left:97.4px;top:242.75px;font-size:6.5px;line-height:6.5px;color:#e0e0e0;transform:scaleX(0.9);transform-origin:0 50%;">bootcode.bin</div>
<svg style="left:90px;top:251.4px" width="5" height="7" viewBox="0 0 5 7"><path d="M0 0 H3.6 L5 1.4 V7 H0 Z" fill="#ececec"/><path d="M1 2.2 H4 M1 3.4 H4 M1 4.6 H4 M1 5.8 H3.5" stroke="#a0a0a0" stroke-width="0.5"/></svg>
<div class="t" style="left:97.4px;top:252.85px;font-size:6.5px;line-height:6.5px;color:#e0e0e0;transform:scaleX(0.9);transform-origin:0 50%;">cmdline.txt</div>
<svg style="left:90px;top:261.5px" width="5" height="7" viewBox="0 0 5 7"><path d="M0 0 H3.6 L5 1.4 V7 H0 Z" fill="#ececec"/><path d="M1 2.2 H4 M1 3.4 H4 M1 4.6 H4 M1 5.8 H3.5" stroke="#a0a0a0" stroke-width="0.5"/></svg>
<div class="t" style="left:97.4px;top:262.95px;font-size:6.5px;line-height:6.5px;color:#e0e0e0;transform:scaleX(0.9);transform-origin:0 50%;">config.txt</div>
<svg style="left:90px;top:271.6px" width="5" height="7" viewBox="0 0 5 7"><path d="M0 0 H3.6 L5 1.4 V7 H0 Z" fill="#f6f6f6"/><path d="M3.6 0 V1.4 H5" fill="#c8c8c8"/></svg>
<div class="t" style="left:97.4px;top:273.05px;font-size:6.5px;line-height:6.5px;color:#e0e0e0;transform:scaleX(0.9);transform-origin:0 50%;">COPYING.linux</div>
<svg style="left:90px;top:281.7px" width="5" height="7" viewBox="0 0 5 7"><path d="M0 0 H3.6 L5 1.4 V7 H0 Z" fill="#f6f6f6"/><path d="M3.6 0 V1.4 H5" fill="#c8c8c8"/></svg>
<div class="t" style="left:97.4px;top:283.15px;font-size:6.5px;line-height:6.5px;color:#e0e0e0;transform:scaleX(0.9);transform-origin:0 50%;">fixup.dat</div>
<svg style="left:90px;top:291.8px" width="5" height="7" viewBox="0 0 5 7"><path d="M0 0 H3.6 L5 1.4 V7 H0 Z" fill="#f6f6f6"/><path d="M3.6 0 V1.4 H5" fill="#c8c8c8"/></svg>
<div class="t" style="left:97.4px;top:293.25px;font-size:6.5px;line-height:6.5px;color:#e0e0e0;transform:scaleX(0.9);transform-origin:0 50%;">fixup_cd.dat</div>
<svg style="left:90px;top:301.9px" width="5" height="7" viewBox="0 0 5 7"><path d="M0 0 H3.6 L5 1.4 V7 H0 Z" fill="#f6f6f6"/><path d="M3.6 0 V1.4 H5" fill="#c8c8c8"/></svg>
<div class="t" style="left:97.4px;top:303.35px;font-size:6.5px;line-height:6.5px;color:#e0e0e0;transform:scaleX(0.9);transform-origin:0 50%;">fixup_db.dat</div>
<svg style="left:90px;top:312.0px" width="5" height="7" viewBox="0 0 5 7"><path d="M0 0 H3.6 L5 1.4 V7 H0 Z" fill="#f6f6f6"/><path d="M3.6 0 V1.4 H5" fill="#c8c8c8"/></svg>
<div class="t" style="left:97.4px;top:313.45px;font-size:6.5px;line-height:6.5px;color:#e0e0e0;transform:scaleX(0.9);transform-origin:0 50%;">fixup_x.dat</div>
<svg style="left:90px;top:322.1px" width="5" height="7" viewBox="0 0 5 7"><path d="M0 0 H3.6 L5 1.4 V7 H0 Z" fill="#f6f6f6"/><path d="M3.6 0 V1.4 H5" fill="#c8c8c8"/></svg>
<div class="t" style="left:97.4px;top:323.55px;font-size:6.5px;line-height:6.5px;color:#e0e0e0;transform:scaleX(0.9);transform-origin:0 50%;">fixup4.dat</div>
<svg style="left:90px;top:332.2px" width="5" height="7" viewBox="0 0 5 7"><path d="M0 0 H3.6 L5 1.4 V7 H0 Z" fill="#f6f6f6"/><path d="M3.6 0 V1.4 H5" fill="#c8c8c8"/></svg>
<div class="t" style="left:97.4px;top:333.65px;font-size:6.5px;line-height:6.5px;color:#e0e0e0;transform:scaleX(0.9);transform-origin:0 50%;">fixup4cd.dat</div>
<svg style="left:90px;top:342.3px" width="5" height="7" viewBox="0 0 5 7"><path d="M0 0 H3.6 L5 1.4 V7 H0 Z" fill="#f6f6f6"/><path d="M3.6 0 V1.4 H5" fill="#c8c8c8"/></svg>
<div class="t" style="left:97.4px;top:343.75px;font-size:6.5px;line-height:6.5px;color:#e0e0e0;transform:scaleX(0.9);transform-origin:0 50%;">fixup4db.dat</div>
<svg style="left:90px;top:352.4px" width="5" height="7" viewBox="0 0 5 7"><path d="M0 0 H3.6 L5 1.4 V7 H0 Z" fill="#f6f6f6"/><path d="M3.6 0 V1.4 H5" fill="#c8c8c8"/></svg>
<div class="t" style="left:97.4px;top:353.85px;font-size:6.5px;line-height:6.5px;color:#e0e0e0;transform:scaleX(0.9);transform-origin:0 50%;">fixup4x.dat</div>
<svg style="left:90px;top:362.5px" width="5" height="7" viewBox="0 0 5 7"><path d="M0 0 H3.6 L5 1.4 V7 H0 Z" fill="#ececec"/><path d="M1 2.2 H4 M1 3.4 H4 M1 4.6 H4 M1 5.8 H3.5" stroke="#a0a0a0" stroke-width="0.5"/></svg>
<div class="t" style="left:97.4px;top:363.95px;font-size:6.5px;line-height:6.5px;color:#e0e0e0;transform:scaleX(0.9);transform-origin:0 50%;">issue.txt</div>
<svg style="left:90px;top:372.6px" width="5" height="7" viewBox="0 0 5 7"><path d="M0 0 H3.6 L5 1.4 V7 H0 Z" fill="#ececec"/><path d="M1 2.2 H4 M1 3.4 H4 M1 4.6 H4 M1 5.8 H3.5" stroke="#a0a0a0" stroke-width="0.5"/></svg>
<div class="t" style="left:97.4px;top:374.05px;font-size:6.5px;line-height:6.5px;color:#e0e0e0;transform:scaleX(0.9);transform-origin:0 50%;">kernel.img</div>
<svg style="left:90px;top:382.7px" width="5" height="7" viewBox="0 0 5 7"><path d="M0 0 H3.6 L5 1.4 V7 H0 Z" fill="#ececec"/><path d="M1 2.2 H4 M1 3.4 H4 M1 4.6 H4 M1 5.8 H3.5" stroke="#a0a0a0" stroke-width="0.5"/></svg>
<div class="t" style="left:97.4px;top:384.15px;font-size:6.5px;line-height:6.5px;color:#e0e0e0;transform:scaleX(0.9);transform-origin:0 50%;">kernel7.img</div>
<svg style="left:90px;top:392.8px" width="5" height="7" viewBox="0 0 5 7"><path d="M0 0 H3.6 L5 1.4 V7 H0 Z" fill="#ececec"/><path d="M1 2.2 H4 M1 3.4 H4 M1 4.6 H4 M1 5.8 H3.5" stroke="#a0a0a0" stroke-width="0.5"/></svg>
<div class="t" style="left:97.4px;top:394.25px;font-size:6.5px;line-height:6.5px;color:#e0e0e0;transform:scaleX(0.9);transform-origin:0 50%;">kernel7l.img</div>
<svg style="left:175.5px;top:89.8px" width="5" height="7" viewBox="0 0 5 7"><path d="M0 0 H3.6 L5 1.4 V7 H0 Z" fill="#ececec"/><path d="M1 2.2 H4 M1 3.4 H4 M1 4.6 H4 M1 5.8 H3.5" stroke="#a0a0a0" stroke-width="0.5"/></svg>
<div class="t" style="left:183px;top:91.25px;font-size:6.5px;line-height:6.5px;color:#e0e0e0;transform:scaleX(0.9);transform-origin:0 50%;">kernel8.img</div>
<svg style="left:175.5px;top:99.9px" width="5" height="7" viewBox="0 0 5 7"><path d="M0 0 H3.6 L5 1.4 V7 H0 Z" fill="#f6f6f6"/><path d="M3.6 0 V1.4 H5" fill="#c8c8c8"/></svg>
<div class="t" style="left:183px;top:101.35px;font-size:6.5px;line-height:6.5px;color:#e0e0e0;transform:scaleX(0.9);transform-origin:0 50%;">LICENCE.broadcom</div>
<svg style="left:175.5px;top:110.0px" width="5" height="7" viewBox="0 0 5 7"><path d="M0 0 H3.6 L5 1.4 V7 H0 Z" fill="#f6f6f6"/><path d="M3.6 0 V1.4 H5" fill="#c8c8c8"/></svg>
<div class="t" style="left:183px;top:111.45px;font-size:6.5px;line-height:6.5px;color:#e0e0e0;transform:scaleX(0.9);transform-origin:0 50%;">start.elf</div>
<svg style="left:175.5px;top:120.1px" width="5" height="7" viewBox="0 0 5 7"><path d="M0 0 H3.6 L5 1.4 V7 H0 Z" fill="#f6f6f6"/><path d="M3.6 0 V1.4 H5" fill="#c8c8c8"/></svg>
<div class="t" style="left:183px;top:121.55px;font-size:6.5px;line-height:6.5px;color:#e0e0e0;transform:scaleX(0.9);transform-origin:0 50%;">start_cd.elf</div>
<svg style="left:175.5px;top:130.2px" width="5" height="7" viewBox="0 0 5 7"><path d="M0 0 H3.6 L5 1.4 V7 H0 Z" fill="#f6f6f6"/><path d="M3.6 0 V1.4 H5" fill="#c8c8c8"/></svg>
<div class="t" style="left:183px;top:131.65px;font-size:6.5px;line-height:6.5px;color:#e0e0e0;transform:scaleX(0.9);transform-origin:0 50%;">start_db.elf</div>
<svg style="left:175.5px;top:140.3px" width="5" height="7" viewBox="0 0 5 7"><path d="M0 0 H3.6 L5 1.4 V7 H0 Z" fill="#f6f6f6"/><path d="M3.6 0 V1.4 H5" fill="#c8c8c8"/></svg>
<div class="t" style="left:183px;top:141.75px;font-size:6.5px;line-height:6.5px;color:#e0e0e0;transform:scaleX(0.9);transform-origin:0 50%;">start_x.elf</div>
<svg style="left:175.5px;top:150.4px" width="5" height="7" viewBox="0 0 5 7"><path d="M0 0 H3.6 L5 1.4 V7 H0 Z" fill="#f6f6f6"/><path d="M3.6 0 V1.4 H5" fill="#c8c8c8"/></svg>
<div class="t" style="left:183px;top:151.85px;font-size:6.5px;line-height:6.5px;color:#e0e0e0;transform:scaleX(0.9);transform-origin:0 50%;">start4.elf</div>
<svg style="left:175.5px;top:160.5px" width="5" height="7" viewBox="0 0 5 7"><path d="M0 0 H3.6 L5 1.4 V7 H0 Z" fill="#f6f6f6"/><path d="M3.6 0 V1.4 H5" fill="#c8c8c8"/></svg>
<div class="t" style="left:183px;top:161.95px;font-size:6.5px;line-height:6.5px;color:#e0e0e0;transform:scaleX(0.9);transform-origin:0 50%;">start4cd.elf</div>
<svg style="left:175.5px;top:170.6px" width="5" height="7" viewBox="0 0 5 7"><path d="M0 0 H3.6 L5 1.4 V7 H0 Z" fill="#f6f6f6"/><path d="M3.6 0 V1.4 H5" fill="#c8c8c8"/></svg>
<div class="t" style="left:183px;top:172.05px;font-size:6.5px;line-height:6.5px;color:#e0e0e0;transform:scaleX(0.9);transform-origin:0 50%;">start4db.elf</div>
<svg style="left:175.5px;top:180.7px" width="5" height="7" viewBox="0 0 5 7"><path d="M0 0 H3.6 L5 1.4 V7 H0 Z" fill="#f6f6f6"/><path d="M3.6 0 V1.4 H5" fill="#c8c8c8"/></svg>
<div class="t" style="left:183px;top:182.15px;font-size:6.5px;line-height:6.5px;color:#e0e0e0;transform:scaleX(0.9);transform-origin:0 50%;">start4x.elf</div>
<div style="left:175px;top:191.40px;width:6px;height:7px;background:#a9d4ec"></div>
<div style="left:175px;top:195.40px;width:4px;height:2px;background:#3c8fc8"></div>
<div class="t" style="left:183px;top:192.25px;font-size:6.5px;line-height:6.5px;color:#e0e0e0;transform:scaleX(0.9);transform-origin:0 50%;">wpa_supplicant.conf</div>
<div class="t" style="left:46.9px;top:2.15px;font-size:5.7px;line-height:5.7px;color:#959595;transform:scaleX(0.9);transform-origin:0 50%;">JERVIS (G:)</div>
<div style="left:396.3px;top:50.3px;width:345.7px;height:285.7px;background:#ffffff;border:1.1px solid #0c2a2e;box-sizing:border-box;box-shadow:0 0 1.5px #06181b"></div>
<div style="left:397px;top:51px;width:344px;height:14.3px;background:#23b5c7;"></div>
<div style="left:681px;top:57.3px;width:4.6px;height:0.7px;background:#1b4c56;"></div>
<svg style="left:703px;top:55.3px" width="6" height="5.6" viewBox="0 0 6 5.6"><rect x="0.4" y="0.4" width="5" height="4.8" fill="none" stroke="#1b4c56" stroke-width="0.8"/></svg>
<svg style="left:726.3px;top:55.3px" width="5" height="5.6" viewBox="0 0 5 5.6"><path d="M0.4 0.4 L4.6 5.2 M4.6 0.4 L0.4 5.2" stroke="#1b4c56" stroke-width="0.8"/></svg>
<svg style="left:402.5px;top:55px" width="6.5" height="7" viewBox="0 0 6.5 7"><rect x="0.3" y="0.3" width="5.5" height="6.4" fill="#cfe0ec"/><rect x="1.3" y="1.5" width="3.5" height="0.5" fill="#6a8aa8"/><rect x="1.3" y="3" width="3.5" height="0.5" fill="#6a8aa8"/><rect x="1.3" y="4.5" width="3" height="0.5" fill="#6a8aa8"/></svg>
<div class="t" style="left:411.1px;top:55.65px;font-size:6.3px;line-height:6.3px;color:#0e3c44;transform:scaleX(0.92);transform-origin:0 50%;">wpa_supplicant.conf - Notepad</div>
<div class="t" style="left:400.5px;top:67.70px;font-size:6.2px;line-height:6.2px;color:#2a2a2a;transform:scaleX(0.93);transform-origin:0 50%;">File</div>
<div class="t" style="left:414.8px;top:67.70px;font-size:6.2px;line-height:6.2px;color:#2a2a2a;transform:scaleX(0.93);transform-origin:0 50%;">Edit</div>
<div class="t" style="left:430.2px;top:67.70px;font-size:6.2px;line-height:6.2px;color:#2a2a2a;transform:scaleX(0.93);transform-origin:0 50%;">Format</div>
<div class="t" style="left:453.6px;top:67.70px;font-size:6.2px;line-height:6.2px;color:#2a2a2a;transform:scaleX(0.93);transform-origin:0 50%;">View</div>
<div class="t" style="left:472px;top:67.70px;font-size:6.2px;line-height:6.2px;color:#2a2a2a;transform:scaleX(0.93);transform-origin:0 50%;">Help</div>
<div class="t" style="left:399.5px;top:77.35px;font-size:6.9px;line-height:6.9px;color:#262626;transform:scaleX(0.935);transform-origin:0 50%;font-family:'Liberation Mono',monospace">country=IN</div>
<div class="t" style="left:399.5px;top:85.77px;font-size:6.9px;line-height:6.9px;color:#262626;transform:scaleX(0.935);transform-origin:0 50%;font-family:'Liberation Mono',monospace">ctrl_interface=DIR=/var/run/wpa_supplicant GROUP=netdev</div>
<div class="t" style="left:399.5px;top:94.19px;font-size:6.9px;line-height:6.9px;color:#262626;transform:scaleX(0.935);transform-origin:0 50%;font-family:'Liberation Mono',monospace">update_config=1</div>
<div class="t" style="left:399.5px;top:111.03px;font-size:6.9px;line-height:6.9px;color:#262626;transform:scaleX(0.935);transform-origin:0 50%;font-family:'Liberation Mono',monospace">network={</div>
<div class="t" style="left:399.5px;top:119.45px;font-size:6.9px;line-height:6.9px;color:#262626;transform:scaleX(0.935);transform-origin:0 50%;font-family:'Liberation Mono',monospace">ssid=&quot;jervisdesktop&quot;</div>
<div class="t" style="left:399.5px;top:127.87px;font-size:6.9px;line-height:6.9px;color:#262626;transform:scaleX(0.935);transform-origin:0 50%;font-family:'Liberation Mono',monospace">scan_ssid=1</div>
<div class="t" style="left:399.5px;top:136.29px;font-size:6.9px;line-height:6.9px;color:#262626;transform:scaleX(0.935);transform-origin:0 50%;font-family:'Liberation Mono',monospace">psk=&quot;jordip98&quot;</div>
<div class="t" style="left:399.5px;top:144.71px;font-size:6.9px;line-height:6.9px;color:#262626;transform:scaleX(0.935);transform-origin:0 50%;font-family:'Liberation Mono',monospace">key_mgmt=WPA-PSK</div>
<div class="t" style="left:399.5px;top:153.13px;font-size:6.9px;line-height:6.9px;color:#262626;transform:scaleX(0.935);transform-origin:0 50%;font-family:'Liberation Mono',monospace">}</div>
<svg style="left:426px;top:137.5px" width="4.5" height="7.5" viewBox="0 0 4.5 7.5"><path d="M0.5 0.6 H4 M2.25 0.6 V6.9 M0.5 6.9 H4" stroke="#1e5a7a" stroke-width="1.1" fill="none"/></svg>
<div style="left:403.6px;top:152.6px;width:0.8px;height:8px;background:#333333;"></div>
<div style="left:397px;top:74.3px;width:336px;height:0.6px;background:#e4e4e4;"></div>
<div style="left:733px;top:75px;width:7px;height:248.5px;background:#f0f0f0;"></div>
<svg style="left:734.5px;top:77px" width="4" height="3" viewBox="0 0 4 3"><path d="M0.4 2.5 L2 0.9 L3.6 2.5" stroke="#a0a0a0" stroke-width="0.6" fill="none"/></svg>
<svg style="left:734.5px;top:317.5px" width="4" height="3" viewBox="0 0 4 3"><path d="M0.4 0.5 L2 2.1 L3.6 0.5" stroke="#a0a0a0" stroke-width="0.6" fill="none"/></svg>
<div style="left:397px;top:323.5px;width:344px;height:11.8px;background:#f0f0f0;"></div>
<div style="left:397px;top:323.5px;width:344px;height:0.6px;background:#e2e2e2;"></div>
<div style="left:531.5px;top:324px;width:0.7px;height:10px;background:#d6d6d6;"></div>
<div style="left:598.8px;top:324px;width:0.7px;height:10px;background:#d6d6d6;"></div>
<div style="left:623.3px;top:324px;width:0.7px;height:10px;background:#d6d6d6;"></div>
<div style="left:681.3px;top:324px;width:0.7px;height:10px;background:#d6d6d6;"></div>
<div class="t" style="left:535px;top:328.10px;font-size:5.6px;line-height:5.6px;color:#3a3a3a;">Ln 10, Col 2</div>
<div class="t" style="left:603px;top:328.10px;font-size:5.6px;line-height:5.6px;color:#3a3a3a;">100%</div>
<div class="t" style="left:627px;top:328.10px;font-size:5.6px;line-height:5.6px;color:#3a3a3a;">Windows (CRLF)</div>
<div class="t" style="left:685px;top:328.10px;font-size:5.6px;line-height:5.6px;color:#3a3a3a;">UTF-8</div>
<svg style="left:735px;top:328.5px" width="5" height="5" viewBox="0 0 5 5"><path d="M4.5 1 L1 4.5 M4.5 2.8 L2.8 4.5" stroke="#b0b0b0" stroke-width="0.6"/></svg>
<div style="left:0px;top:407.6px;width:745.6px;height:10.4px;background:#2b2b2b;"></div>
<div class="t" style="left:7px;top:410.00px;font-size:6.8px;line-height:6.8px;color:#d8d8d8;transform:scaleX(0.83);transform-origin:0 50%;">42 items</div>
<div class="t" style="left:32.8px;top:410.00px;font-size:6.8px;line-height:6.8px;color:#b8b8b8;">|</div>
<div class="t" style="left:38px;top:410.00px;font-size:6.8px;line-height:6.8px;color:#d8d8d8;transform:scaleX(0.83);transform-origin:0 50%;">1 item selected</div>
<div class="t" style="left:81px;top:410.00px;font-size:6.8px;line-height:6.8px;color:#d8d8d8;transform:scaleX(0.83);transform-origin:0 50%;">0 bytes</div>
<div class="t" style="left:103.6px;top:410.00px;font-size:6.8px;line-height:6.8px;color:#b8b8b8;">|</div>
<svg style="left:723.5px;top:410px" width="4.5" height="7" viewBox="0 0 4.5 7"><rect x="0.2" y="0.3" width="1.6" height="6.4" fill="#d8d8d8"/><rect x="2.6" y="1" width="1.8" height="0.5" fill="#6a6a6a"/><rect x="2.6" y="3.2" width="1.8" height="0.5" fill="#6a6a6a"/><rect x="2.6" y="5.4" width="1.8" height="0.5" fill="#6a6a6a"/></svg>
<svg style="left:734.5px;top:410px" width="8" height="6" viewBox="0 0 8 6"><rect x="0" y="0" width="8" height="6" fill="#d8e8f4"/><rect x="0.8" y="3" width="6.4" height="2.4" fill="#5a8ab8"/><rect x="1.5" y="1" width="2" height="1.2" fill="#f8f8f8"/></svg>
</div></body></html>
